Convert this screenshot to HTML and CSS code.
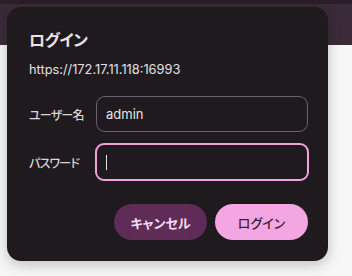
FILE: index.html
```html
<!DOCTYPE html>
<html lang="ja">
<head>
<meta charset="utf-8">
<link rel="stylesheet" href="styles.css">
</head>
<body>
<header class="appbar"></header>
<main class="page"></main>
<div class="dialog" role="dialog">
  <h1 class="title">ログイン</h1>
  <p class="url">https://172.17.11.118:16993</p>
  <form class="form">
    <label class="label" for="user">ユーザー名</label>
    <div class="field"><span class="value">admin</span></div>
    <label class="label" for="pass">パスワード</label>
    <div class="field focused"><span class="caret"></span></div>
  </form>
  <div class="actions">
    <button class="btn cancel">キャンセル</button>
    <button class="btn primary">ログイン</button>
  </div>
</div>
</body>
</html>
```
FILE: styles.css
```css
html, body {
  margin: 0;
  padding: 0;
}
body {
  width: 352px;
  height: 276px;
  background: #f7f7f7;
  font-family: "Inter", "Noto Sans CJK JP", sans-serif;
  overflow: hidden;
}
.appbar {
  height: 41px;
  background: #3b2b39;
  border-top: 4px solid #2a1f28;
}
.dialog {
  position: absolute;
  left: 7px;
  top: 7px;
  width: 321px;
  height: 254px;
  box-sizing: border-box;
  padding: 23px 20px 0 22px;
  background: #1e1a1e;
  border-radius: 14px;
  box-shadow: 0 4px 14px rgba(0, 0, 0, 0.22);
  color: #e9e0e7;
  font-feature-settings: "palt";
}
.title {
  margin: 0;
  font-size: 16px;
  line-height: 20px;
  font-weight: 700;
  color: #ece3ea;
  letter-spacing: -0.5px;
}
.url {
  margin: 12px 0 0;
  font-size: 12.8px;
  line-height: 16px;
  color: #e8e0e6;
}
.form {
  margin-top: 18px;
  display: grid;
  grid-template-columns: 67px 212px;
  grid-auto-rows: 36px;
  row-gap: 12px;
  align-items: center;
}
.label {
  font-size: 12px;
  font-weight: 500;
  letter-spacing: -0.8px;
  color: #dcd2d9;
}
.field {
  height: 36px;
  box-sizing: border-box;
  border: 1px solid #6c626a;
  border-radius: 9px;
  display: flex;
  align-items: center;
  padding-left: 9px;
}
.field.focused {
  height: 38px;
  margin: 0 -1px;
  border: 2px solid #f2a3df;
  padding-left: 9px;
}
.value {
  font-size: 13px;
  color: #ebe3e9;
}
.caret {
  width: 1px;
  height: 15px;
  background: #e8e0e6;
}
.actions {
  margin-top: 24px;
  display: flex;
  justify-content: flex-end;
  gap: 8px;
}
.btn {
  width: 93px;
  height: 36px;
  border: 0;
  border-radius: 18px;
  font-family: inherit;
  font-feature-settings: "palt";
  font-size: 13px;
  font-weight: 700;
  padding: 0;
}
.cancel {
  background: #5f2c58;
  color: #f6dcef;
}
.primary {
  background: #f4a6e2;
  color: #3c1d35;
  font-weight: 500;
}
```
